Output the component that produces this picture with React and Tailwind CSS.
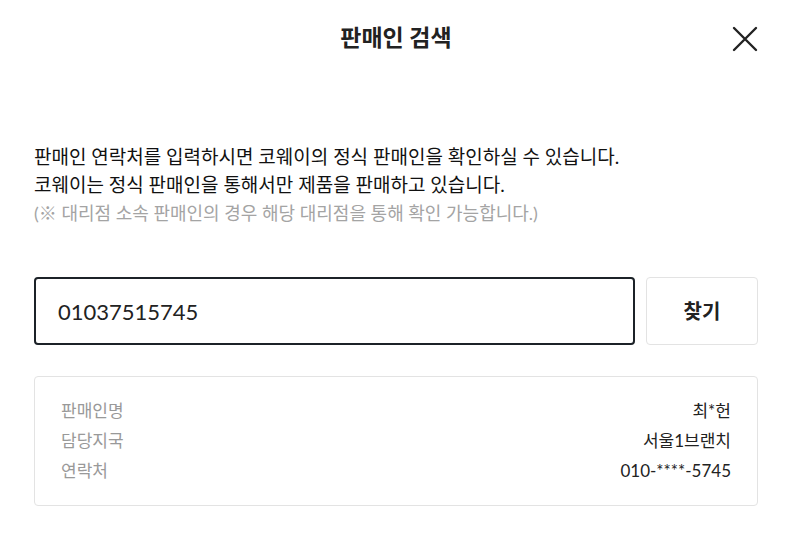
export default function App() {
  const rows = [
    ["판매인명", "최*헌"],
    ["담당지국", "서울1브랜치"],
    ["연락처", "010-****-5745"],
  ];
  return (
    <div
      className="w-[792px] h-[556px] bg-white text-[#111] px-[34px]"
      style={{ fontFamily: "Lato, 'Noto Sans CJK KR', sans-serif" }}
    >
      {/* Header */}
      <div className="relative h-[78px] flex items-center justify-center">
        <h1 className="text-[23px] font-bold text-[#222] -mt-[3px]">판매인 검색</h1>
        <button className="absolute right-0 top-[26px] w-[26px] h-[26px] flex items-center justify-center">
          <svg width="26" height="26" viewBox="0 0 26 26" fill="none" stroke="#222" strokeWidth="2.4" strokeLinecap="round">
            <path d="M2 2L24 24M24 2L2 24" />
          </svg>
        </button>
      </div>

      {/* Description */}
      <div className="mt-[65px] text-[19px] leading-[28px]">
        <p>판매인 연락처를 입력하시면 코웨이의 정식 판매인을 확인하실 수 있습니다.</p>
        <p>코웨이는 정식 판매인을 통해서만 제품을 판매하고 있습니다.</p>
        <p className="text-[18px] text-[#a4a4a4]">(※ 대리점 소속 판매인의 경우 해당 대리점을 통해 확인 가능합니다.)</p>
      </div>

      {/* Search */}
      <div className="mt-[50px] flex gap-[11px]">
        <div className="flex-1 h-[68px] border-2 border-[#1c2228] rounded-[4px] flex items-center px-[22px]">
          <input
            className="w-full outline-none text-[22px] text-[#222] bg-transparent"
            defaultValue="01037515745"
          />
        </div>
        <button className="w-[112px] h-[68px] border border-[#e3e3e3] rounded-[4px] text-[20px] font-bold text-[#222]">
          찾기
        </button>
      </div>

      {/* Result */}
      <div className="mt-[31px] border border-[#e3e3e3] rounded-[4px] px-[26px] py-[19px] flex flex-col">
        {rows.map(([k, v]) => (
          <div key={k} className="flex justify-between h-[30px] items-center text-[17px]">
            <span className="text-[#999]">{k}</span>
            <span className="text-[#222]">{v}</span>
          </div>
        ))}
      </div>
    </div>
  );
}
